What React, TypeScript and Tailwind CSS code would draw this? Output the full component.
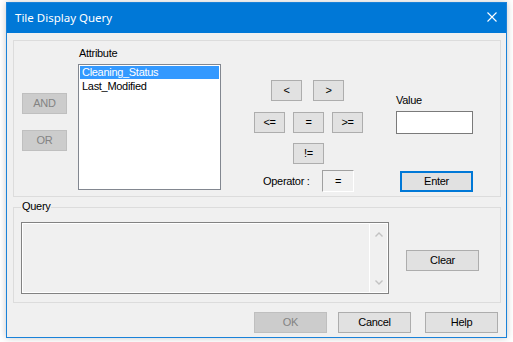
import React from "react";

type BtnProps = {
  label: string;
  w?: string;
  disabled?: boolean;
  focus?: boolean;
  className?: string;
};

function Button({ label, w = "w-[73px]", disabled = false, focus = false, className = "" }: BtnProps) {
  const look = disabled
    ? "bg-[#cccccc] border border-[#bfbfbf] text-[#838383]"
    : focus
    ? "bg-[#e1e1e1] border-2 border-[#0078d7] text-black"
    : "bg-[#e1e1e1] border border-[#adadad] text-black";
  return (
    <div className={`h-[21px] shrink-0 flex items-center justify-center text-[11px] leading-[13px] ${w} ${look} ${className}`}>
      {label}
    </div>
  );
}

function Chevron({ up }: { up?: boolean }) {
  return (
    <svg width="8" height="5" viewBox="0 0 8 5" className="block">
      <path
        d={up ? "M0.5 4.5 L4 1 L7.5 4.5" : "M0.5 0.5 L4 4 L7.5 0.5"}
        fill="none"
        stroke="#c2c2c2"
        strokeWidth="1.4"
      />
    </svg>
  );
}

export default function App() {
  return (
    <div className="w-[513px] h-[342px] bg-white overflow-hidden font-['Liberation_Sans',Arial,sans-serif] tracking-[-0.3px] text-black">
      <div className="ml-[6px] mt-[2px] w-[501px] h-[336px] border border-[#1a82d9] bg-[#f0f0f0] shadow-[0_0_7px_rgba(0,0,0,0.22)] flex flex-col">
        {/* Title bar */}
        <div className="h-[30px] shrink-0 bg-[#0078d7] flex items-center justify-between pl-[8px] pr-[9px]">
          <span className="text-white text-[11.5px] leading-[16px] tracking-normal font-['Noto_Sans',sans-serif] mt-[-1px]">
            Tile Display Query
          </span>
          <svg width="10" height="10" viewBox="0 0 10 10" className="block mt-[-3px]">
            <path d="M0.5 0.5 L9.5 9.5 M9.5 0.5 L0.5 9.5" stroke="white" strokeWidth="1.1" />
          </svg>
        </div>

        {/* Attribute group */}
        <div className="mt-[7px] ml-[6px] w-[488px] h-[157px] shrink-0 border border-[#dcdcdc] flex">
          {/* AND / OR */}
          <div className="ml-[8px] mt-[52px] flex flex-col gap-[16px]">
            <Button label="AND" w="w-[45px]" disabled />
            <Button label="OR" w="w-[45px]" disabled />
          </div>

          {/* Attribute list */}
          <div className="ml-[11px] flex flex-col">
            <div className="mt-[6px] pl-[1px] text-[11px] leading-[13px]">Attribute</div>
            <div className="mt-[4px] w-[143px] h-[126px] border border-[#828790] bg-white p-[1px] text-[11px] leading-[13px]">
              <div className="h-[13px] bg-[#3399ff] text-white pl-[2px]">Cleaning_Status</div>
              <div className="h-[13px] pl-[2px] mt-[1px]">Last_Modified</div>
            </div>
          </div>

          {/* Operators */}
          <div className="ml-[33px] w-[109px] mt-[39px] flex flex-col">
            <div className="flex pl-[17px] gap-[11px]">
              <Button label="<" w="w-[31px]" />
              <Button label=">" w="w-[31px]" />
            </div>
            <div className="flex mt-[11px] gap-[8px]">
              <Button label="<=" w="w-[31px]" />
              <Button label="=" w="w-[31px]" />
              <Button label=">=" w="w-[31px]" />
            </div>
            <div className="flex mt-[10px] pl-[39px]">
              <Button label="!=" w="w-[31px]" />
            </div>
            <div className="flex items-center mt-[6px] pl-[9px]">
              <div className="w-[59px] text-[11px] leading-[13px]">Operator :</div>
              <div className="w-[32px] h-[22px] border-t border-l border-[#a0a0a0] border-r border-b border-r-white border-b-white flex items-center justify-center text-[11px] leading-[13px]">
                =
              </div>
            </div>
          </div>

          {/* Value */}
          <div className="ml-[33px] w-[77px] flex flex-col">
            <div className="mt-[53px] text-[11px] leading-[13px]">Value</div>
            <div className="mt-[4px] w-[77px] h-[23px] border border-[#7a7a7a] bg-white" />
            <Button label="Enter" w="w-[73px]" focus className="mt-[37px] ml-[4px]" />
          </div>
        </div>

        {/* Query group */}
        <div className="mt-[10px] ml-[6px] w-[488px] h-[96px] shrink-0 border border-[#dcdcdc] relative flex">
          <div className="absolute -top-[8px] left-[7px] px-[1px] bg-[#f0f0f0] text-[11px] leading-[13px]">Query</div>
          <div className="ml-[7px] mt-[14px] w-[368px] h-[72px] border border-[#828282] shadow-[inset_0_0_0_1px_#ffffff] bg-[#f0f0f0] flex justify-end p-[1px]">
            <div className="w-[18px] border-l border-white flex flex-col items-center justify-between pt-[8px] pb-[7px]">
              <Chevron up />
              <Chevron />
            </div>
          </div>
          <Button label="Clear" className="ml-[17px] mt-[42px]" />
        </div>

        {/* Footer */}
        <div className="mt-[9px] flex">
          <Button label="OK" disabled className="ml-[247px]" />
          <Button label="Cancel" className="ml-[11px]" />
          <Button label="Help" className="ml-[14px]" />
        </div>
      </div>
    </div>
  );
}
